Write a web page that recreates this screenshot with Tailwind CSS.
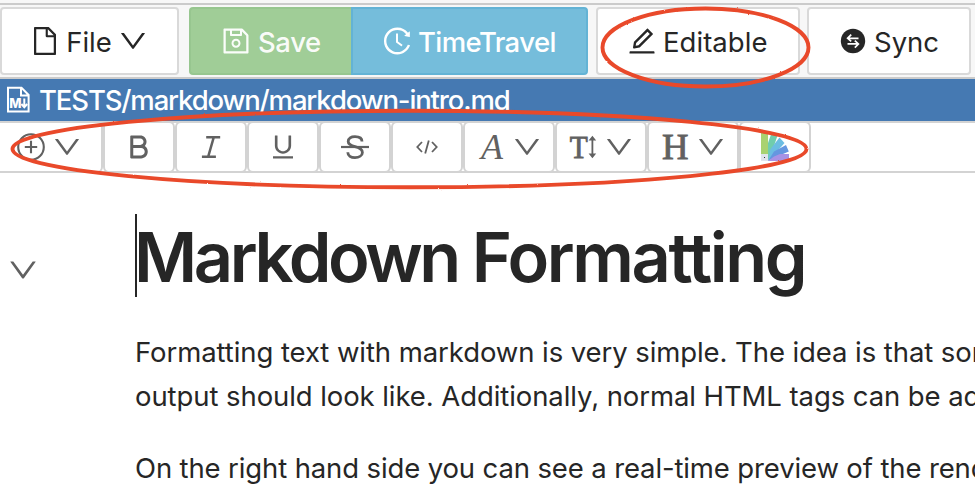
<!DOCTYPE html>
<html lang="en">
<head>
<meta charset="utf-8">
<title>markdown-intro.md</title>
<script src="https://cdn.jsdelivr.net/npm/@tailwindcss/browser@4"></script>
</head>
<body class="relative w-[975px] h-[494px] overflow-hidden bg-white text-[#262626] font-['Inter','Liberation_Sans',sans-serif] text-[27.5px] leading-[44px]">
<svg class="hidden">
  <symbol id="down" viewBox="64 64 896 896"><path d="M884 256h-75c-5.1 0-9.9 2.5-12.9 6.6L512 654.2 227.9 262.6c-3-4.1-7.8-6.6-12.9-6.6h-75c-6.5 0-10.3 7.4-6.5 12.7l352.6 486.1c12.8 17.6 39 17.6 51.7 0l352.6-486.1c3.9-5.3.1-12.7-6.4-12.7z"/></symbol>
</svg>

<!-- Main button bar -->
<header class="h-[79px] pt-[3px] bg-[#f7f7f7]">
  <div class="h-[76px] border-y-2 border-[#cbcbcb] flex pt-[2px] whitespace-nowrap">
    <button class="w-[179px] h-[68px] shrink-0 flex items-center bg-white border-2 border-[#d9d9d9] rounded-[4px] pl-[29px]">
      <svg class="size-[28px] shrink-0" viewBox="64 64 896 896" fill="currentColor"><path d="M854.6 288.6L639.4 73.4c-6-6-14.1-9.4-22.6-9.4H192c-17.7 0-32 14.3-32 32v832c0 17.7 14.3 32 32 32h640c17.7 0 32-14.3 32-32V311.3c0-8.5-3.4-16.7-9.4-22.7zM790.2 326H602V137.8L790.2 326zm1.8 562H232V136h302v216a42 42 0 0042 42h216v494z"/></svg>
      <span class="pt-[2px] ml-[7px] w-[46px] tracking-[0px]">File</span>
      <svg class="ml-[7px] size-[28px] shrink-0" fill="currentColor"><use href="#down"/></svg>
    </button>
    <button class="ml-[10px] w-[162px] h-[68px] shrink-0 flex items-center bg-[#a0cd97] border-2 border-r-0 border-[#97c68f] rounded-l-[4px] text-white/95 pl-[31px]">
      <svg class="size-[28px] shrink-0" viewBox="64 64 896 896" fill="currentColor"><path d="M893.3 293.3L730.7 130.7c-7.5-7.5-16.7-13-26.7-16V112H144c-17.7 0-32 14.3-32 32v736c0 17.7 14.3 32 32 32h736c17.7 0 32-14.3 32-32V338.5c0-17-6.7-33.2-18.7-45.2zM384 184h256v104H384V184zm456 656H184V184h136v136c0 17.7 14.3 32 32 32h320c17.7 0 32-14.3 32-32V205.8l136 136V840zM512 442c-79.5 0-144 64.5-144 144s64.5 144 144 144 144-64.5 144-144-64.5-144-144-144zm0 224c-44.2 0-80-35.8-80-80s35.8-80 80-80 80 35.8 80 80-35.8 80-80 80z"/></svg>
      <span class="pt-[2px] ml-[8px] font-medium tracking-[-0.4px]">Save</span>
    </button>
    <button class="w-[237px] h-[68px] shrink-0 flex items-center bg-[#75bddb] border-2 border-[#63b3d5] rounded-r-[4px] text-white pl-[30px]">
      <svg class="size-[28px] shrink-0" viewBox="64 64 896 896" fill="currentColor"><path d="M536.1 273H488c-4.4 0-8 3.6-8 8v275.3c0 2.6 1.2 5 3.3 6.5l165.3 120.7c3.6 2.6 8.6 1.9 11.2-1.7l28.6-39c2.7-3.7 1.9-8.7-1.7-11.2L544.1 528.5V281c0-4.4-3.6-8-8-8zm219.8 75.2l156.8 38.3c5 1.2 9.9-2.6 9.9-7.7l.8-161.5c0-6.7-7.7-10.5-12.9-6.3L752.9 334.1a8 8 0 003 14.1zm167.7 301.1l-56.7-19.5a8 8 0 00-10.1 4.8c-1.9 5.1-3.9 10.1-6 15.1-17.8 42.1-43.3 80-75.9 112.5a353 353 0 01-112.5 75.9 352.18 352.18 0 01-137.7 27.8c-47.8 0-94.1-9.3-137.7-27.8a353 353 0 01-112.5-75.9c-32.5-32.5-58-70.4-75.9-112.5A353.44 353.44 0 01171 512c0-47.8 9.3-94.2 27.8-137.8 17.8-42.1 43.3-80 75.9-112.5a353 353 0 01112.5-75.9C430.6 167.3 477 158 524.8 158s94.1 9.3 137.7 27.8A353 353 0 01775 261.7c10.2 10.3 19.8 21 28.6 32.3l59.8-46.8C784.7 146.6 662.2 81.9 524.6 82 285 82.1 92.6 276.7 95 516.4 97.4 751.9 288.9 942 524.8 942c185.5 0 343.5-117.6 403.7-282.3 1.5-4.2-.7-8.9-4.9-10.4z"/></svg>
      <span class="pt-[2px] ml-[7px] font-medium tracking-[-0.6px]">TimeTravel</span>
    </button>
    <button class="ml-[8px] w-[204px] h-[68px] shrink-0 flex items-center bg-white border-2 border-[#d9d9d9] rounded-[4px] pl-[30px]">
      <svg class="size-[28px] shrink-0" viewBox="64 64 896 896" fill="currentColor"><path d="M257.7 752c2 0 4-.2 6-.5L431.9 722c2-.4 3.9-1.3 5.3-2.8l423.9-423.9a9.96 9.96 0 000-14.1L694.9 114.9c-1.9-1.9-4.4-2.9-7.1-2.9s-5.2 1-7.1 2.9L256.8 538.8c-1.5 1.5-2.4 3.3-2.8 5.3l-29.5 168.2a33.5 33.5 0 009.4 29.8c6.6 6.4 14.9 9.9 23.8 9.9zm67.4-174.4L687.8 215l73.3 73.3-362.7 362.6-88.9 15.7 15.6-89zM880 836H144c-17.7 0-32 14.3-32 32v36c0 4.4 3.6 8 8 8h784c4.4 0 8-3.6 8-8v-36c0-17.7-14.3-32-32-32z"/></svg>
      <span class="pt-[2px] ml-[7px] tracking-[0.05px]">Editable</span>
    </button>
    <button class="ml-[7px] w-[164px] h-[68px] shrink-0 flex items-center bg-white border-2 border-[#d9d9d9] rounded-[4px] pl-[30px]">
      <svg class="size-[28px] shrink-0" viewBox="0 0 28 28" fill="none"><circle cx="14" cy="14" r="12.2" fill="#262626"/><path d="M19.5 11.4H8.7M12.2 7.6L8.6 11.3L12.2 14.4M8.5 16.9H19.3M15.8 13.6L19.4 17L15.8 20.6" stroke="#fff" stroke-width="1.7"/></svg>
      <span class="pt-[2px] ml-[7px] tracking-[0px]">Sync</span>
    </button>
  </div>
</header>

<!-- File path -->
<div class="h-[42px] bg-[#4579b2] text-white flex items-center pl-[4px] whitespace-nowrap">
  <svg class="size-[28px] shrink-0" viewBox="0 0 28 28" fill="none" stroke="#fff" stroke-width="2"><path d="M4 1.8H17.5L24.6 9V25.6H4ZM17 2V9.4H24.5"/><text x="5.3" y="22.3" font-size="13" font-weight="800" font-family="Inter" fill="#fff" stroke="none">M</text><path d="M20.3 12.5V20.5M17.4 18L20.3 21.3L23.2 18"/></svg>
  <span class="ml-[7px] font-medium tracking-[-1.14px]">TESTS/markdown/markdown-intro.md</span>
</div>

<!-- Formatting toolbar -->
<nav class="h-[52px] border-y-2 border-[#d3d3d3] text-[#616161] flex">
  <button class="-my-[2px] -ml-[8px] w-[111px] h-[52px] border-2 border-[#d3d3d3] rounded-[6px] flex items-center pl-[23px] gap-[8px]">
    <svg class="size-[28px] shrink-0" viewBox="0 0 28 28" fill="none" stroke="currentColor" stroke-width="2.1"><circle cx="14" cy="14" r="12.8"/><path d="M14 7.8V20.2M7.8 14H20.2"/></svg>
    <svg class="size-[28px] shrink-0" fill="currentColor"><use href="#down"/></svg>
  </button>
  <button class="-my-[2px] w-[72px] h-[52px] border-2 border-[#d3d3d3] rounded-[6px] flex items-center justify-center">
    <svg class="size-[28px]" viewBox="64 64 896 896" fill="currentColor"><path d="M697.8 481.4c33.6-35 54.2-82.3 54.2-134.3v-10.2C752 229.3 663.9 142 555.3 142H259.4c-15.1 0-27.4 12.3-27.4 27.4v679.1c0 16.3 13.2 29.5 29.5 29.5h318.7c117 0 211.8-94.2 211.8-210.5v-11c0-73-37.4-137.3-94.2-175.1zM328 238h224.7c57.1 0 103.3 44.4 103.3 99.3v9.5c0 54.8-46.3 99.3-103.3 99.3H328V238zm366.6 429.4c0 62.9-51.7 113.9-115.5 113.9H328V542.7h251.1c63.8 0 115.5 51 115.5 113.9v10.8z"/></svg>
  </button>
  <button class="-my-[2px] w-[72px] h-[52px] border-2 border-[#d3d3d3] rounded-[6px] flex items-center justify-center">
    <svg class="size-[28px]" viewBox="64 64 896 896" fill="currentColor"><path d="M798 160H366c-4.4 0-8 3.6-8 8v64c0 4.4 3.6 8 8 8h181.2l-156 544H229c-4.4 0-8 3.6-8 8v64c0 4.4 3.6 8 8 8h432c4.4 0 8-3.6 8-8v-64c0-4.4-3.6-8-8-8H474.4l156-544H798c4.4 0 8-3.6 8-8v-64c0-4.4-3.6-8-8-8z"/></svg>
  </button>
  <button class="-my-[2px] w-[72px] h-[52px] border-2 border-[#d3d3d3] rounded-[6px] flex items-center justify-center">
    <svg class="size-[28px]" viewBox="64 64 896 896" fill="currentColor"><path d="M824 804H200c-4.4 0-8 3.4-8 7.6v60.8c0 4.2 3.6 7.6 8 7.6h624c4.4 0 8-3.4 8-7.6v-60.8c0-4.2-3.6-7.6-8-7.6zm-312-76c69.4 0 134.6-27.1 183.8-76.2C745 602.7 772 537.4 772 468V156c0-6.6-5.4-12-12-12h-60c-6.6 0-12 5.4-12 12v312c0 97-79 176-176 176s-176-79-176-176V156c0-6.6-5.4-12-12-12h-60c-6.6 0-12 5.4-12 12v312c0 69.4 27.1 134.6 76.2 183.8C377.3 701 442.6 728 512 728z"/></svg>
  </button>
  <button class="-my-[2px] w-[72px] h-[52px] border-2 border-[#d3d3d3] rounded-[6px] flex items-center justify-center">
    <svg class="size-[28px]" viewBox="0 0 28 28" fill="none" stroke="currentColor" stroke-width="2.8"><path d="M21 8.6C21 5.3 18 3.7 14 3.7S7.2 5.4 7.2 8.6C7.2 11.5 10 12.7 14 13.7S21.4 16.2 21.4 19.4S18 24.6 14 24.6S6.8 22.8 6.8 19.2"/><path d="M0 14H28" stroke-width="2.2"/></svg>
  </button>
  <button class="-my-[2px] w-[72px] h-[52px] border-2 border-[#d3d3d3] rounded-[6px] flex items-center justify-center">
    <svg class="size-[28px]" viewBox="0 0 28 28" fill="none" stroke="currentColor" stroke-width="1.8"><path d="M9 9L4.3 14L9 19M19 9L23.7 14L19 19M15.8 7.5L12.2 20.5"/></svg>
  </button>
  <button class="-my-[2px] w-[92px] h-[52px] border-2 border-[#d3d3d3] rounded-[6px] flex items-center pl-[12px] gap-[8px]">
    <svg class="size-[28px] shrink-0 overflow-visible" viewBox="0 0 28 28" fill="currentColor"><text x="4" y="25.5" font-size="36" font-style="italic" font-family="Liberation Serif">A</text></svg>
    <svg class="size-[28px] shrink-0" fill="currentColor"><use href="#down"/></svg>
  </button>
  <button class="-my-[2px] w-[92px] h-[52px] border-2 border-[#d3d3d3] rounded-[6px] flex items-center pl-[12px] gap-[8px]">
    <svg class="size-[28px] shrink-0 overflow-visible" viewBox="0 0 28 28" fill="currentColor"><text x="0.7" y="24.9" font-size="32" font-family="Liberation Serif" stroke="currentColor" stroke-width=".9" textLength="18" lengthAdjust="spacingAndGlyphs">T</text><path d="M22.5 7.5V20.5H19.6L23.4 25.2L27.2 20.5H24.3V7.5H27.2L23.4 2.8L19.6 7.5Z"/></svg>
    <svg class="size-[28px] shrink-0" fill="currentColor"><use href="#down"/></svg>
  </button>
  <button class="-my-[2px] w-[92px] h-[52px] border-2 border-[#d3d3d3] rounded-[6px] flex items-center pl-[12px] gap-[8px]">
    <svg class="size-[28px] shrink-0 overflow-visible" viewBox="0 0 28 28" fill="currentColor"><text x="0.9" y="25.9" font-size="36" font-family="Liberation Serif" stroke="currentColor" stroke-width=".9" textLength="26.5" lengthAdjust="spacingAndGlyphs">H</text></svg>
    <svg class="size-[28px] shrink-0" fill="currentColor"><use href="#down"/></svg>
  </button>
  <button class="-my-[2px] w-[72px] h-[52px] border-2 border-[#d3d3d3] rounded-[6px] flex items-center justify-center">
    <svg class="size-[28px]" viewBox="761 133 28 28"><path fill="#a9d270" d="M761 133h7v21h-7z"/><path fill="#e0e4ec" d="M761 154h7v7h-7z"/><path fill="#333" d="M764 157h1v1h-1z"/><path fill="#70cdad" d="M768 161V143L771.5 133L777.5 135.5L771 155Z"/><path fill="#6cbde2" d="M768 161L770.5 149L779.5 137.5L784.5 143L773 156Z"/><path fill="#6597e0" d="M768 161L774 151.5L786 145L788.8 151.5L776 157Z"/><path fill="#a892e5" d="M768 161L774 156.5L780 154H789V161Z"/></svg>
  </button>
</nav>

<!-- Document -->
<main class="flex whitespace-nowrap">
  <div class="w-[135px] shrink-0 pt-[82px] pl-[8px] text-[#616161]">
    <svg class="size-[30px]" fill="currentColor"><use href="#down"/></svg>
  </div>
  <article class="w-[840px] overflow-hidden">
    <h1 class="mt-[41px] h-[83px] border-l-2 border-[#262626] text-[68.5px] leading-[88px] font-semibold indent-[-3px]"><span class="tracking-[-3.4px]">Markdown </span><span class="tracking-[-2.4px]">Formatting</span></h1>
    <p class="mt-[33px] tracking-[-0.08px]">Formatting text with markdown is very simple. The idea is that some<br>output should look like. Additionally, normal HTML tags can be added</p>
    <p class="mt-[28px] tracking-[-0.13px]">On the right hand side you can see a real-time preview of the rendered</p>
  </article>
</main>

<!-- Hand-drawn highlights over the toolbar -->
<svg class="absolute left-0 top-0 w-[975px] h-[494px]" viewBox="0 0 975 494" fill="none" stroke="#e9482a" stroke-width="3.9">
  <filter id="rough" filterUnits="userSpaceOnUse" x="0" y="0" width="975" height="494"><feTurbulence type="fractalNoise" baseFrequency=".3" numOctaves="2" seed="4"/><feDisplacementMap in="SourceGraphic" scale="1.6" xChannelSelector="R" yChannelSelector="G"/></filter>
  <g filter="url(#rough)">
    <ellipse cx="705.5" cy="47.5" rx="103" ry="39"/>
    <ellipse cx="409.5" cy="149" rx="397" ry="38.3"/>
  </g>
</svg>
</body>
</html>
